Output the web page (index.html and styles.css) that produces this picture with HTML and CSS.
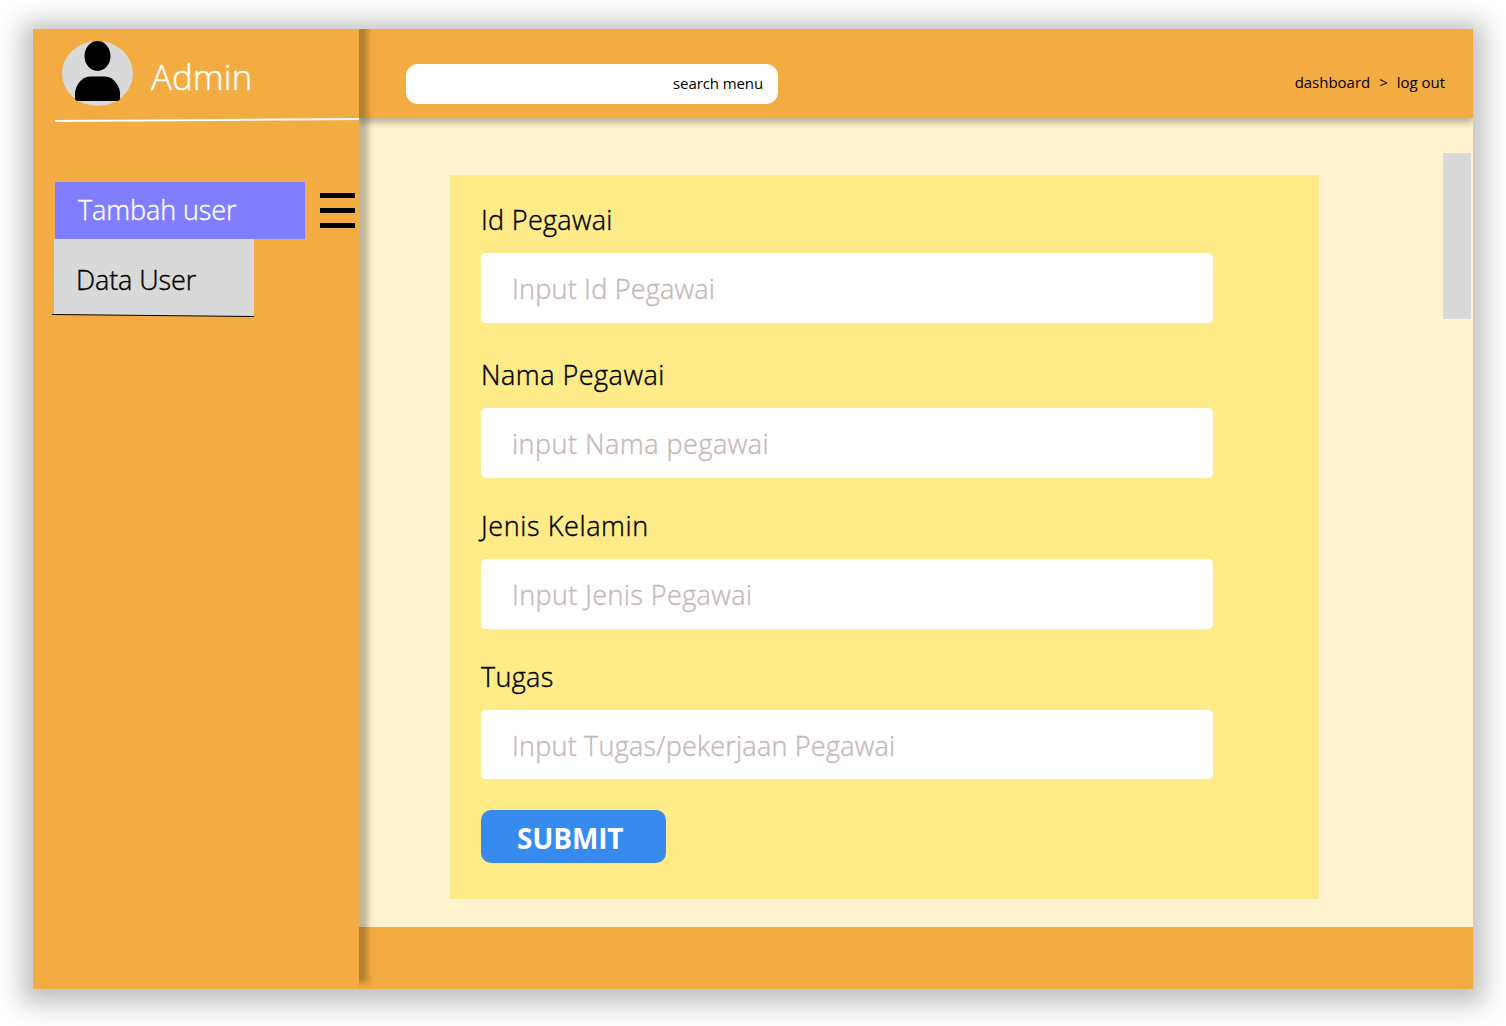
FILE: index.html
```html
<!DOCTYPE html>
<html lang="id">
<head>
<meta charset="utf-8">
<title>Tambah user</title>
<link rel="stylesheet" href="styles.css">
</head>
<body>
<div class="board">
  <aside class="sidebar">
    <div class="profile">
      <svg class="avatar" width="71" height="65" viewBox="0 0 71 65">
        <ellipse cx="35.5" cy="32.5" rx="35.5" ry="32.5" fill="#d9d9d9"/>
        <ellipse cx="35.5" cy="15" rx="13" ry="15"/>
        <path d="M28 35.500H43C52 35.500 58 46 58 52V57Q58 60 55 60H16Q13 60 13 57V52C13 46 19 35.500 28 35.500Z"/>
      </svg>
      <span class="name">Admin</span>
    </div>
    <svg class="rule" width="304" height="4" viewBox="0 0 304 4"><path d="M0 3L304 1" stroke="#fff" stroke-width="2"/></svg>
    <nav class="menu">
      <div class="menu-row">
        <a class="item active">Tambah user</a>
        <svg class="burger" width="35" height="35" viewBox="0 0 35 35"><path d="M0 0H35V5H0ZM0 15H35V20H0ZM0 30H35V35H0Z"/></svg>
      </div>
      <a class="item sub">Data User</a>
      <svg class="subline" width="202" height="4" viewBox="0 0 202 4"><path d="M2 0H202V2.500L2 .5Z" fill="#d9d9d9"/><path d="M0 .5L202 2.500" stroke="#000"/></svg>
    </nav>
  </aside>
  <div class="page">
    <header class="topbar">
      <div class="search">search menu</div>
      <div class="crumbs"><span>dashboard</span><span class="sep">&gt;</span><span>log out</span></div>
    </header>
    <main class="content">
      <form class="form">
        <label class="label">Id Pegawai</label>
        <div class="field">Input Id Pegawai</div>
        <label class="label wide">Nama Pegawai</label>
        <div class="field wide">input Nama pegawai</div>
        <label class="label tight wider">Jenis Kelamin</label>
        <div class="field gender">Input Jenis Pegawai</div>
        <label class="label tight">Tugas</label>
        <div class="field last">Input Tugas/pekerjaan Pegawai</div>
        <button class="submit" type="button">SUBMIT</button>
      </form>
      <div class="scroll"></div>
    </main>
    <footer class="footer"></footer>
  </div>
</div>
</body>
</html>
```
FILE: styles.css
```css
* { box-sizing: border-box; }
body {
  margin: 0;
  padding: 29px 33px;
  height: 1026px;
  overflow: hidden;
  background: #fff;
  color: #000;
  font: 300 27px/34px "Open Sans", sans-serif;
}
.board {
  display: flex;
  width: 1440px;
  height: 960px;
  overflow: hidden;
  box-shadow: 0 4px 24px 11px rgba(0, 0, 0, .25);
}
svg { display: block; flex: none; }
.sidebar {
  position: relative;
  z-index: 2;
  flex: none;
  width: 326px;
  padding-top: 12px;
  background: #f3ac42;
  box-shadow: 9px -6px 6px rgba(0, 0, 0, .25);
}
.profile { display: flex; height: 77px; padding-left: 29px; }
.name { margin: 14px 0 0 18px; color: #fff; font-size: 35px; line-height: 44px; }
.name, .item, .label, .field { -webkit-text-stroke: .4px currentColor; }
.rule { margin-left: 22px; }
.menu { padding: 60px 0 0 19px; }
.menu-row { display: flex; align-items: center; gap: 15px; padding-left: 3px; }
.item { display: flex; align-items: center; }
.active { width: 250px; height: 57px; padding: 0 0 2px 23px; background: #807dff; color: #fff; letter-spacing: -.1px; }
.sub { width: 200px; height: 75px; margin-left: 2px; padding: 7px 0 0 22px; background: #d9d9d9; letter-spacing: -.1px; }
.page { display: flex; flex: 1; flex-direction: column; }
.topbar {
  position: relative;
  z-index: 1;
  display: flex;
  justify-content: space-between;
  height: 89px;
  padding: 35px 28px 0 47px;
  background: #f3ac42;
  box-shadow: 0 5px 6px rgba(0, 0, 0, .25);
  font-size: 15px;
  line-height: 20px;
  font-weight: 400;
  letter-spacing: -.1px;
}
.search { width: 372px; height: 40px; padding: 9px 15px; border-radius: 12px; background: #fff; text-align: right; }
.crumbs { display: flex; padding-top: 8px; letter-spacing: -.02px; }
.sep { margin: 0 9px; }
.content { display: flex; justify-content: space-between; height: 809px; background: #fff2ce; }
.form { width: 869px; height: 724px; margin: 57px 0 0 91px; padding: 28px 31px 0; background: #ffec89; }
.label { display: block; height: 50px; letter-spacing: .3px; }
.field { display: flex; align-items: center; width: 732px; height: 70px; margin-bottom: 35px; padding: 2px 31px 0; border-radius: 5px; background: #fff; color: #c6b9b9; letter-spacing: .22px; }
.wide { letter-spacing: .5px; }
.wider { letter-spacing: .6px; }
.gender { letter-spacing: .4px; }
.tight { margin-top: -4px; }
.last { height: 69px; margin-bottom: 31px; }
.submit { display: block; width: 185px; height: 53px; padding: 2px 0 0 36px; border: 0; border-radius: 10px; background: #388bee; color: #fff; font: 700 28px/36px "Open Sans", sans-serif; letter-spacing: -.15px; text-align: left; }
.scroll { width: 28px; height: 166px; margin: 35px 2px 0 0; background: #d9d9d9; }
.footer { height: 62px; background: #f3ac42; }
```
